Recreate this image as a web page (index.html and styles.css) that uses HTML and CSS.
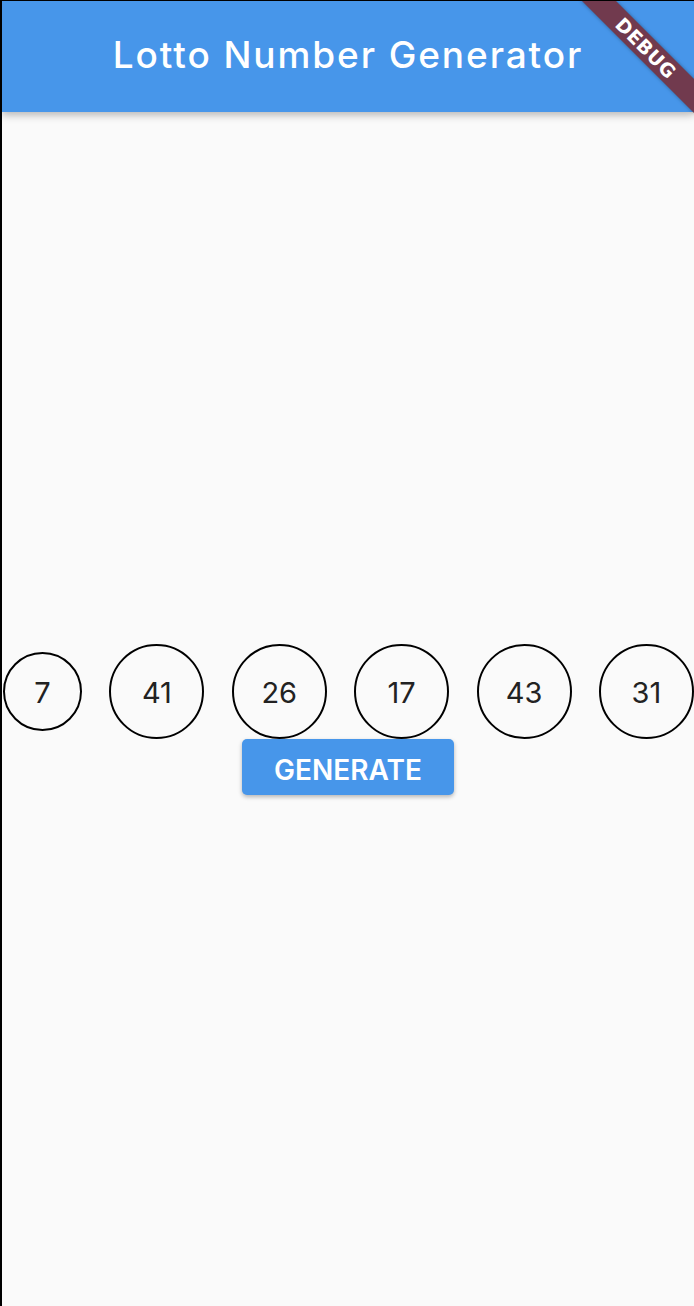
FILE: index.html
```html
<!DOCTYPE html>
<html>
<head>
<meta charset="utf-8">
<link rel="stylesheet" href="styles.css">
</head>
<body>
<div class="app">
  <header class="appbar">
    <h1 class="title">Lotto Number Generator</h1>
  </header>
  <main class="content">
    <div class="group">
      <div class="balls">
        <div class="ball small">7</div>
        <div class="ball">41</div>
        <div class="ball">26</div>
        <div class="ball">17</div>
        <div class="ball">43</div>
        <div class="ball">31</div>
      </div>
      <button class="generate">GENERATE</button>
    </div>
  </main>
  <div class="debug"><span>DEBUG</span></div>
</div>
</body>
</html>
```

FILE: styles.css
```css
html, body {
  margin: 0;
  padding: 0;
}
body {
  width: 694px;
  height: 1306px;
  background: #000;
  overflow: hidden;
  font-family: Inter, Roboto, sans-serif;
}
.app {
  position: relative;
  box-sizing: border-box;
  width: 694px;
  height: 1306px;
  border-left: 2px solid #000;
  border-top: 1px solid #000;
  background: #fafafa;
  display: flex;
  flex-direction: column;
  overflow: hidden;
}
.appbar {
  position: relative;
  z-index: 2;
  height: 111px;
  flex: none;
  background: #4796ea;
  display: flex;
  align-items: center;
  justify-content: center;
  box-shadow: 0 3px 8px rgba(0, 0, 0, 0.28);
}
.title {
  margin: 0;
  padding-bottom: 4px;
  color: #fff;
  font-size: 37px;
  font-weight: 500;
  letter-spacing: 1.9px;
}
.content {
  flex: 1;
  display: flex;
  flex-direction: column;
  justify-content: center;
}
.group {
  padding-top: 20px;
  display: flex;
  flex-direction: column;
  align-items: center;
}
.balls {
  align-self: stretch;
  display: flex;
  justify-content: space-between;
  align-items: center;
  height: 96px;
  padding-left: 1px;
}
.ball {
  box-sizing: border-box;
  width: 95px;
  height: 95px;
  border: 2px solid #000;
  border-radius: 50%;
  display: flex;
  align-items: center;
  justify-content: center;
  font-size: 29px;
  color: #222;
  padding-top: 3px;
}
.ball.small {
  width: 79px;
  height: 79px;
}
.generate {
  width: 212px;
  height: 56px;
  border: none;
  border-radius: 5px;
  background: #4796ea;
  color: #fff;
  font-family: Inter, Roboto, sans-serif;
  font-size: 28px;
  font-weight: 600;
  letter-spacing: 0;
  box-shadow: 0 2px 4px rgba(0, 0, 0, 0.28);
  padding: 5px 0 0 0;
}
.debug {
  position: absolute;
  z-index: 5;
  top: 35px;
  left: 564px;
  width: 160px;
  height: 24px;
  background: #713a4e;
  transform: rotate(45deg);
  display: flex;
  align-items: center;
  justify-content: center;
  box-shadow: 0 0 4px rgba(0, 0, 0, 0.35);
}
.debug span {
  color: #fff;
  font-family: "DejaVu Sans", sans-serif;
  font-weight: 900;
  font-size: 19px;
  line-height: 1;
  letter-spacing: 0.5px;
}
```
